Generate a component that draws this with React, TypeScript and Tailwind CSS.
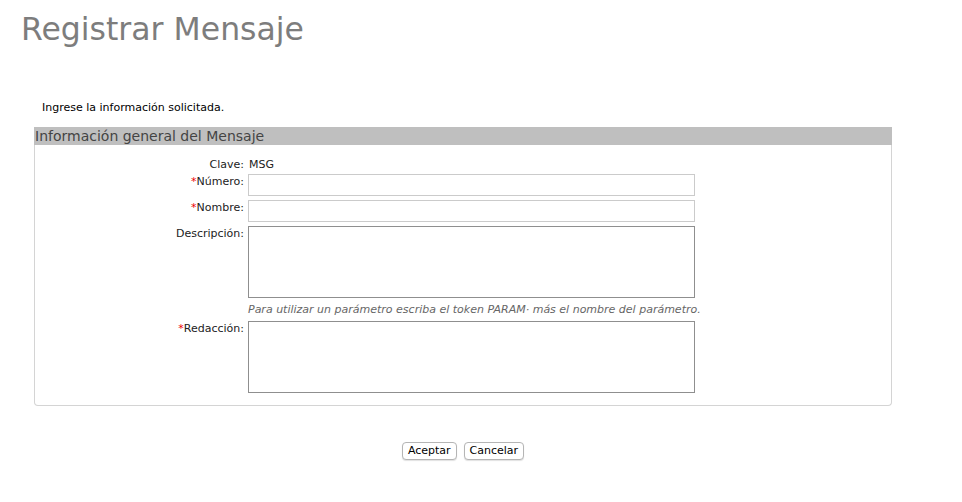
const FIELDS_FONT = "font-['DejaVu_Sans',Verdana,sans-serif]";

export default function App() {
  return (
    <div className={`min-h-[502px] w-[962px] bg-white ${FIELDS_FONT}`}>
      <h1 className="pl-[21px] pt-[9px] text-[31.5px] leading-[40px] text-[#7d7d7d]">
        Registrar Mensaje
      </h1>

      <div className="w-[858px] ml-[34px]">
        <p className="mt-[52px] pl-[8px] text-[11px] leading-[14px] text-black">
          Ingrese la información solicitada.
        </p>

        <section className="mt-[12px] rounded-b-[4px] rounded-t-[2px] border border-t-0 border-[#d4d4d4]">
          <h2 className="-mx-px bg-[#bfbfbf] pl-[1px] text-[14px] leading-[18px] text-[#444]">
            Información general del Mensaje
          </h2>

          <div className="grid grid-cols-[209px_447px] gap-x-[4px] pb-[12px] pt-[13px] text-[11px] leading-[14px] text-[#222]">
            <span className="text-right">Clave:</span>
            <span className="pl-px">MSG</span>

            <Label text="Número:" required className="mt-[2px]" />
            <input className="mt-[2px] h-[22px] border border-[#cbcbcb] bg-white" />

            <Label text="Nombre:" required className="mt-[4px]" />
            <input className="mt-[4px] h-[22px] border border-[#cbcbcb] bg-white" />

            <Label text="Descripción:" className="mt-[4px]" />
            <textarea className="mt-[4px] h-[72px] resize-none border border-[#8f8f8f] bg-white" />

            <span />
            <p className="whitespace-nowrap pb-[4px] pt-[5px] text-[11px] italic leading-[14px] text-[#666]">
              Para utilizar un parámetro escriba el token PARAM· más el nombre del parámetro.
            </p>

            <Label text="Redacción:" required />
            <textarea className="h-[72px] resize-none border border-[#8f8f8f] bg-white" />
          </div>
        </section>

        <div className="mt-[36px] flex justify-center gap-[7px] text-[11px]">
          <Button>Aceptar</Button>
          <Button>Cancelar</Button>
        </div>
      </div>
    </div>
  );
}

function Label({
  text,
  required,
  className = "",
}: {
  text: string;
  required?: boolean;
  className?: string;
}) {
  return (
    <span className={`pt-[1px] text-right ${className}`}>
      {required ? <span className="text-[#e00]">*</span> : null}
      {text}
    </span>
  );
}

function Button({ children }: { children: string }) {
  return (
    <button
      type="button"
      className="h-[18px] rounded-[4px] border border-[#b5b5b5] bg-white px-[5px] text-[11px] leading-[16px] text-black shadow-[0_1px_1px_rgba(0,0,0,0.12)]"
    >
      {children}
    </button>
  );
}
